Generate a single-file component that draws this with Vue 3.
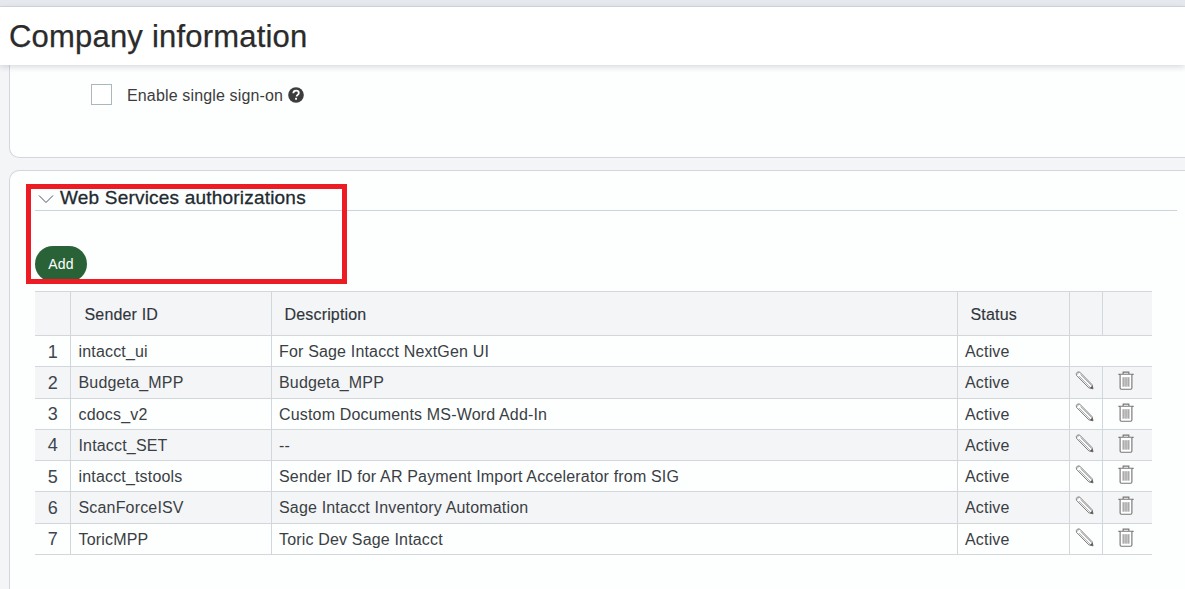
<script setup>
const rows = [
  { n: 1, id: 'intacct_ui', desc: 'For Sage Intacct NextGen UI', actions: false },
  { n: 2, id: 'Budgeta_MPP', desc: 'Budgeta_MPP', actions: true },
  { n: 3, id: 'cdocs_v2', desc: 'Custom Documents MS-Word Add-In', actions: true },
  { n: 4, id: 'Intacct_SET', desc: '--', actions: true },
  { n: 5, id: 'intacct_tstools', desc: 'Sender ID for AR Payment Import Accelerator from SIG', actions: true },
  { n: 6, id: 'ScanForceISV', desc: 'Sage Intacct Inventory Automation', actions: true },
  { n: 7, id: 'ToricMPP', desc: 'Toric Dev Sage Intacct', actions: true },
]
</script>

<template>
  <div class="page">
    <div class="topstrip"></div>
    <header class="titlebar"><h1>Company information</h1></header>
    <main class="content">
      <section class="panel first">
        <label class="sso">
          <span class="box"></span>
          <span class="sso-label">Enable single sign-on</span>
          <svg class="help" viewBox="0 0 16 16" width="16" height="16">
            <circle cx="8" cy="8" r="7.8" fill="#3d3d3d" />
            <path d="M5.3 6.2C5.4 4.6 6.6 3.7 8.1 3.7c1.6 0 2.7.9 2.7 2.2 0 1-.6 1.6-1.3 2.1-.6.4-.8.7-.8 1.3v.3" fill="none" stroke="#fff" stroke-width="1.8" />
            <rect x="7.1" y="10.8" width="1.9" height="1.9" fill="#fff" />
          </svg>
        </label>
      </section>
      <section class="panel second">
        <div class="sec-head">
          <svg class="chev" viewBox="0 0 16 10" width="16" height="10">
            <path d="M1 1.5 8 8.5 15 1.5" fill="none" stroke="#4a5560" stroke-width="1" />
          </svg>
          <h2>Web Services authorizations</h2>
        </div>
        <button class="add">Add</button>
        <table class="grid">
          <colgroup>
            <col class="c0" /><col class="c1" /><col class="c2" /><col class="c3" /><col class="c4" /><col class="c5" />
          </colgroup>
          <thead>
            <tr>
              <th></th><th class="idcol">Sender ID</th><th>Description</th><th>Status</th><th></th><th></th>
            </tr>
          </thead>
          <tbody>
            <tr v-for="r in rows" :key="r.n" :class="{ alt: r.n % 2 === 0 || r.n === 6 }">
              <td class="num">{{ r.n }}</td>
              <td class="idcol">{{ r.id }}</td>
              <td>{{ r.desc }}</td>
              <td>Active</td>
              <td v-if="r.actions" class="act">
                <svg class="pencil" viewBox="0 0 20 20" width="19" height="19">
                  <path d="M2.8 1 5 1.2 18 14.4 19 18.8 14.6 17.8 1.6 4.6 1.4 2.6Z" fill="#fff" stroke="#777" stroke-width="1" stroke-linejoin="round" />
                  <path d="M1.6 4 4.6 1.2M4.2 5.4 16 17.2M5.8 3.8 17.6 15.6" fill="none" stroke="#999" stroke-width="0.9" />
                  <path d="M15.6 18 19 18.8 18.2 15.4Z" fill="#555" />
                </svg>
              </td>
              <td v-if="r.actions" class="act">
                <svg class="trash" viewBox="0 0 18 20" width="18" height="19">
                  <path d="M6 3V1.2h6V3M1 3.5h16" fill="none" stroke="#777" stroke-width="1.2" />
                  <path d="M2.8 4v14a1.2 1.2 0 0 0 1.2 1.2h10a1.2 1.2 0 0 0 1.2-1.2V4" fill="#fff" stroke="#777" stroke-width="1.2" />
                  <path d="M6 6.5v10M8 6.5v10M10 6.5v10M12 6.5v10" fill="none" stroke="#777" stroke-width="1" />
                </svg>
              </td>
              <td v-if="!r.actions" colspan="2" class="blank"></td>
            </tr>
          </tbody>
        </table>
      </section>
    </main>
    <div class="highlight"></div>
  </div>
</template>

<style>
html, body { margin: 0; background: #f4f5f7; }
</style>

<style scoped>
.page {
  position: relative;
  width: 1185px;
  height: 589px;
  overflow: hidden;
  background: #f4f5f7;
  font-family: "Liberation Sans", Arial, sans-serif;
  color: #333;
}
.topstrip {
  height: 6px;
  background: #e5e8ec;
  border-bottom: 1px solid #d3d8dd;
}
.titlebar {
  position: relative;
  z-index: 2;
  height: 58px;
  background: #fff;
  box-shadow: 0 2px 6px rgba(60, 70, 80, 0.2);
  display: flex;
  align-items: center;
  padding: 1px 0 0 9px;
  box-sizing: border-box;
}
h1 {
  margin: 0;
  font-size: 31px;
  font-weight: 400;
  color: #2b2b2b;
  letter-spacing: 0.2px;
  -webkit-text-stroke: 0.25px #2b2b2b;
}
.content {
  padding-left: 9px;
}
.panel {
  background: #fdfefe;
  border: 1px solid #d2d7dc;
  border-right: none;
  box-sizing: border-box;
}
.first {
  height: 93px;
  border-top: none;
  border-radius: 0 0 0 10px;
  padding: 19px 0 0 81px;
}
.sso {
  display: flex;
  align-items: center;
}
.box {
  width: 19px;
  height: 19px;
  border: 1px solid #aab8bd;
  background: #fff;
  margin-right: 15px;
}
.sso-label {
  font-size: 16px;
  color: #3c3c3c;
  letter-spacing: 0.15px;
  margin: 2px 5px 0 0;
}
.help { display: block; }
.second {
  margin-top: 12px;
  height: 430px;
  border-bottom: none;
  border-radius: 10px 0 0 0;
  padding: 14px 8px 0 25px;
}
.sec-head {
  display: flex;
  align-items: center;
  height: 25px;
  border-bottom: 1px solid #ccd3da;
  box-sizing: content-box;
}
.chev {
  margin: 3px 6px 0 3px;
}
h2 {
  margin: 0;
  font-size: 19px;
  font-weight: 400;
  letter-spacing: 0.2px;
  color: #222a30;
  -webkit-text-stroke: 0.3px #222a30;
}
.add {
  display: block;
  margin-top: 35px;
  width: 52px;
  height: 36px;
  border: none;
  border-radius: 18px;
  background: #2a6238;
  color: #fff;
  font: 14px "Liberation Sans", Arial, sans-serif;
  letter-spacing: 0.2px;
  padding: 0;
}
.grid {
  margin-top: 9px;
  width: 1117px;
  table-layout: fixed;
  border-collapse: collapse;
  font-size: 16px;
  letter-spacing: 0.17px;
  color: #3a3f44;
}
.c0 { width: 35px; }
.c1 { width: 201px; }
.c2 { width: 686px; }
.c3 { width: 112px; }
.c4 { width: 33px; }
.c5 { width: 50px; }
th {
  height: 44px;
  padding: 3px 0 0 13px;
  box-sizing: border-box;
  background: #f4f5f7;
  text-align: left;
  font-weight: 400;
  color: #30363c;
  border: 1px solid #d2d7dc;
  -webkit-text-stroke: 0.15px #30363c;
}
td {
  height: 31.28px;
  padding: 2px 0 0 7.5px;
  box-sizing: border-box;
  border: 1px solid #d2d7dc;
  white-space: nowrap;
}
th.idcol { padding-left: 14px; }
td.idcol { padding-left: 8px; }
th:first-child, td:first-child { border-left: none; }
th:last-child, td:last-child { border-right: none; }
tr.alt td { background: #f4f5f7; }
td.num {
  padding: 2px 0 0 1px;
  text-align: center;
  font-size: 18px;
  letter-spacing: 0;
  color: #3c4650;
}
td.act { padding: 0; text-align: center; }
td.act svg { display: block; margin-bottom: 3px; }
.pencil { margin-left: 5px; }
.trash { margin-left: 14px; }
</style>

<style scoped>
.highlight {
  position: absolute;
  left: 26px;
  top: 184px;
  width: 321px;
  height: 100px;
  border: 5px solid #ed1c24;
  box-sizing: border-box;
  z-index: 3;
  pointer-events: none;
}
</style>
